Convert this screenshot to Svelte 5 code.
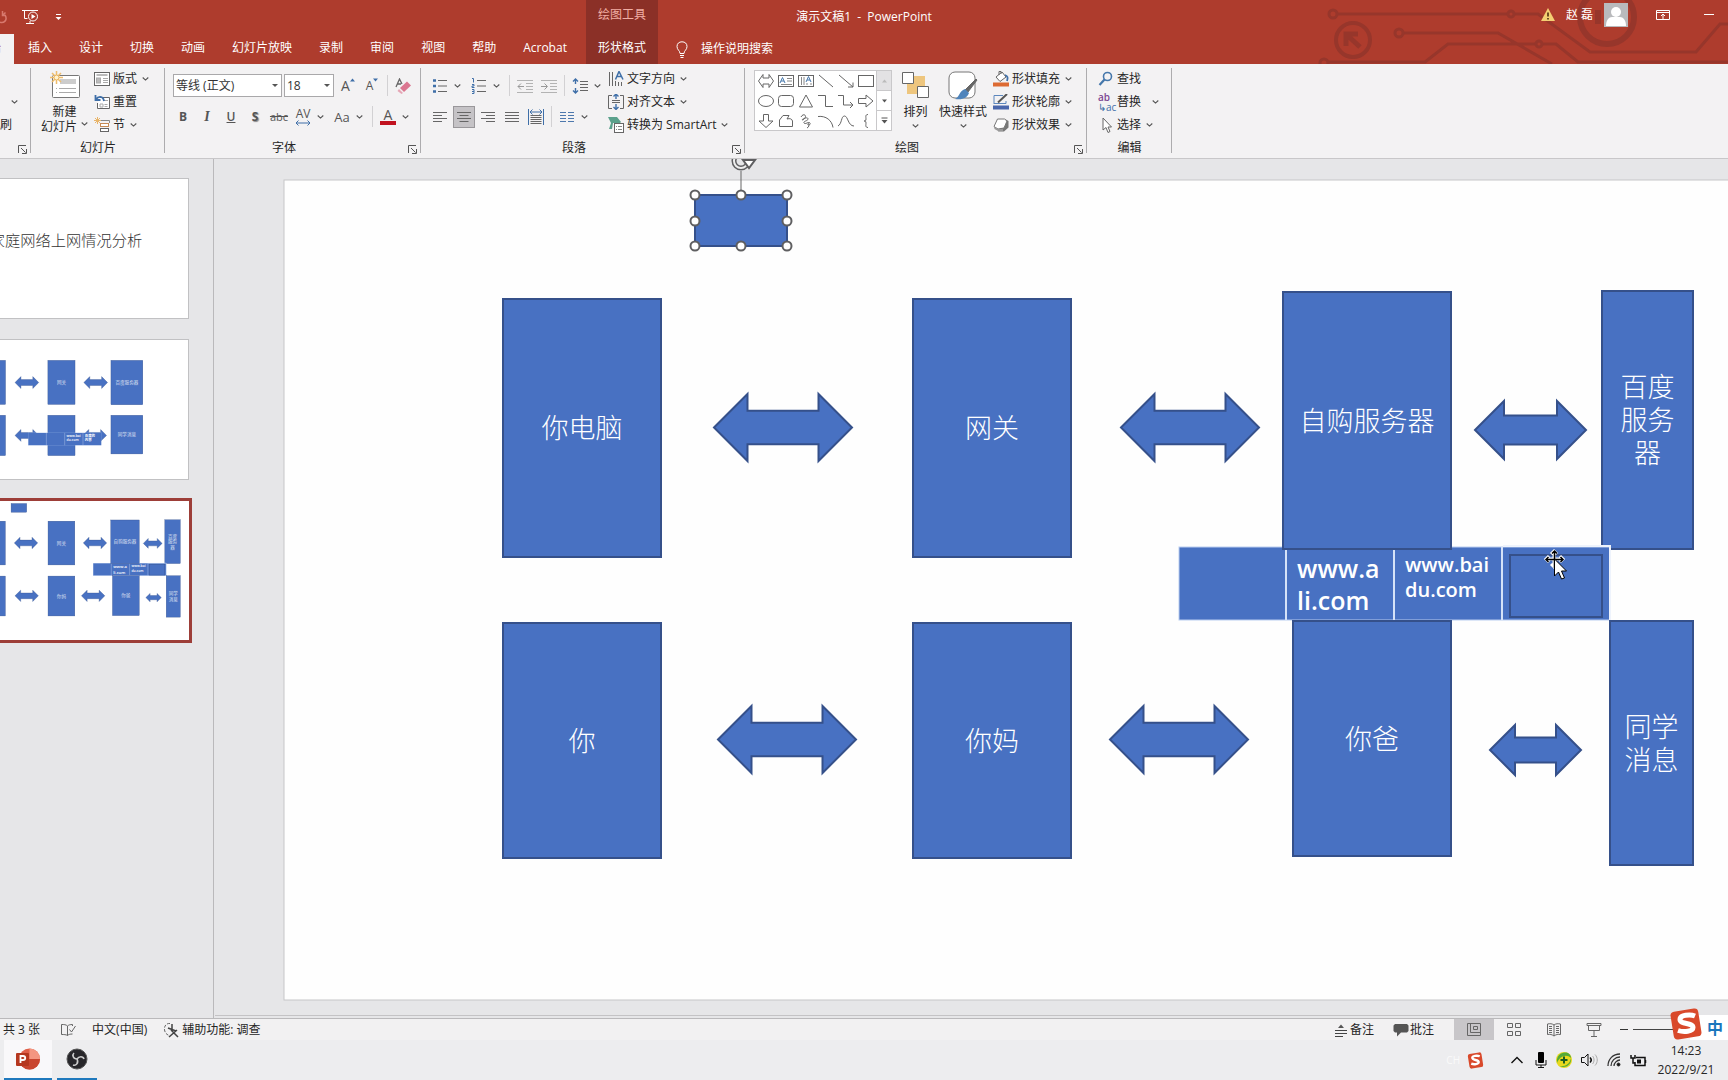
<script>
  const tabs = ['插入', '设计', '切换', '动画', '幻灯片放映', '录制', '审阅', '视图', '帮助', 'Acrobat'];
  const gallery = ['dblarrow', 'textbox', 'vtextbox', 'line', 'linearrow', 'rect', 'oval', 'round', 'tri', 'elbow', 'elbowarrow', 'right', 'down', 'freeform', 'scribble', 'arc', 'curve', 'brace'];

  const box = (x, y, w, h, lines = []) => ({ x, y, w, h, lines });
  const arrow = (x, y, w, h) => ({ x, y, w, h });

  const slide1 = { boxes: [], arrows: [], heading: '家庭网络上网情况分析' };
  const slide2 = {
    boxes: [
      box(224, 120, 160, 260, ['你电脑']), box(634, 120, 160, 260, ['网关']), box(1006, 120, 188, 262, ['百度服务器']),
      box(224, 444, 160, 238, ['你']), box(634, 444, 160, 238), box(1006, 444, 188, 228, ['同学消息'])
    ],
    arrows: [arrow(440, 216, 140, 70), arrow(846, 216, 140, 70), arrow(440, 528, 140, 70), arrow(840, 528, 140, 70)],
    table: { x: 518, y: 548, cells: [[], [], ['www.bai', 'du.com'], ['百度的', '内容']] }
  };
  const slide3 = {
    boxes: [
      box(219, 119, 158, 258, ['你电脑']), box(629, 119, 158, 258, ['网关']), box(999, 112, 168, 257, ['自购服务器']),
      box(219, 443, 158, 235, ['你']), box(629, 443, 158, 235, ['你妈']), box(1009, 441, 158, 235, ['你爸']),
      box(1326, 441, 83, 244, ['同学', '消息'])
    ],
    under: [box(1318, 111, 91, 258, ['百度', '服务', '器'])],
    arrows: [
      arrow(430, 214, 138, 67), arrow(837, 214, 138, 67), arrow(1191, 221, 111, 58),
      arrow(434, 526, 138, 67), arrow(826, 526, 138, 67), arrow(1206, 545, 91, 50)
    ],
    table: { x: 895, y: 367, cells: [[], ['www.a', 'li.com'], ['www.bai', 'du.com'], []], big: 1, mark: true },
    inset: true
  };

  const arrowPoints = (a) => {
    const k = a.h / 2, q = a.h / 4, r = a.x + a.w, m = a.y + k;
    return `${a.x},${m} ${a.x + k},${a.y} ${a.x + k},${a.y + q} ${r - k},${a.y + q} ${r - k},${a.y} ${r},${m} ${r - k},${a.y + a.h} ${r - k},${a.y + a.h - q} ${a.x + k},${a.y + a.h - q} ${a.x + k},${a.y + a.h}`;
  };
  const handles = [[411, 15], [457, 15], [503, 15], [411, 41], [503, 41], [411, 66], [457, 66], [503, 66]];
</script>

{#snippet chev()}
  <svg class="chev" viewBox="0 0 7 4" width="7" height="4" aria-hidden="true"><path d="M.7.5l2.800 2.600L6.300.5" fill="none" stroke="#555" stroke-width="1.100" /></svg>
{/snippet}

{#snippet launcher(label)}
  <button class="launcher" aria-label={label}>
    <svg viewBox="0 0 9 9" width="9" height="9"><path d="M.5 8V.5H8M3 3l4.500 4.500M8.500 4v4.500H4" fill="none" stroke="#555" /></svg>
  </button>
{/snippet}

{#snippet node(b)}
  <rect class="node" x={b.x} y={b.y} width={b.w} height={b.h} />
  {#each b.lines as line, i}
    <text class="node-text" x={b.x + b.w / 2} y={b.y + b.h / 2 + 10 + (i - (b.lines.length - 1) / 2) * 33}>{line}</text>
  {/each}
{/snippet}

{#snippet slide(s)}
  {#if s.heading}<text class="heading" x="741" y="396">{s.heading}</text>{/if}
  {#each s.arrows as a}<polygon class="node" points={arrowPoints(a)} />{/each}
  {#each s.under ?? [] as b}{@render node(b)}{/each}
  {#if s.table && s.inset}{@render table(s.table)}{/if}
  {#each s.boxes as b}{@render node(b)}{/each}
  {#if s.table && !s.inset}{@render table(s.table)}{/if}
{/snippet}

{#snippet table(t)}
  <rect x={t.x} y={t.y} width="431" height="73" fill="#4871c2" stroke="#b9cdf0" />
  {#each t.cells as cell, i}
    {#if i}<path d={`M${t.x + i * 108 - 1} ${t.y}v73`} stroke="#d5e2f8" stroke-width="2" />{/if}
    {#each cell as line, j}
      <text class={i === t.big ? 'cell big' : 'cell'} x={t.x + i * 108 + 10} y={t.y + (i === t.big ? 31 : 25) + j * (i === t.big ? 32 : 25)}>{line}</text>
    {/each}
  {/each}
  {#if t.mark}
    <path d={`M${t.x + 324} ${t.y - 1}h107v74`} fill="none" stroke="#eef3fc" stroke-width="2" />
    <rect class="node" x={t.x + 331} y={t.y + 8} width="92" height="62" />
  {/if}
{/snippet}

{#snippet icon(n)}
  <svg class="ico" viewBox="0 0 16 16" width="16" height="16" fill="none" stroke="#666" aria-hidden="true">
    {#if n === 'layout'}
      <rect x=".5" y="1.500" width="15" height="13" fill="#fff" /><path d="M2.500 4h11" stroke="#bbb" stroke-width="2" /><rect x="2.500" y="7" width="4" height="5" fill="#bbb" stroke="#aaa" /><path d="M9 7.500h5M9 9.500h5M9 11.500h5" stroke="#aaa" />
    {:else if n === 'reset'}
      <path d="M6 3.500h9.500v11h-12V9" fill="#fff" /><path d="M6 10h3v3H6zM10.500 10.500h3M10.500 12.500h3M9 6.500h5" stroke="#aaa" /><path d="M1.500 1v5h5M2 5.500C4 2 9 1.500 10 7" stroke="#3f6fa8" stroke-width="1.800" />
    {:else if n === 'section'}
      <path d="M7 3.500h8.500V6" stroke="#888" /><rect x="6.500" y="6.500" width="8" height="3" stroke="#c68a55" fill="#fff" /><rect x="6.500" y="11.500" width="8" height="3" fill="#fff" /><path d="M3.500 0v7M0 3.500h7M1 1l5 5M6 1L1 6" stroke="#e8b56a" />
    {:else if n === 'bullets'}
      <path d="M1 2.500h3M1 8h3M1 13.500h3" stroke="#3f6fa8" stroke-width="2.500" /><path d="M6 2.500h9M6 8h9M6 13.500h9" />
    {:else if n === 'numbers'}
      <path d="M1 .5h1.500v4M1 6.500h2v1.500H1v1.500h2.500M1 11.500h2v4H1M1 13.500h2" stroke="#3f6fa8" /><path d="M6 2.500h9M6 8h9M6 13.500h9" />
    {:else if n === 'outdent' || n === 'indent'}
      <path d="M0 2.500h16M9 5.500h7M9 8.500h7M9 11.500h7M0 14.500h16" stroke="#b3b3b3" />
      {#if n === 'outdent'}<path d="M7 8.500H1M4 5.500l-3 3 3 3" stroke="#999" />{:else}<path d="M0 8.500h6M3.500 5.500l3 3-3 3" stroke="#999" />{/if}
    {:else if n === 'spacing'}
      <path d="M3.500 1v5M1 3.500l2.500-2.500L6 3.500M3.500 10v5M1 12.500L3.500 15 6 12.500" stroke="#3f6fa8" stroke-width="1.400" /><path d="M8 3.500h8M8 6.500h8M8 9.500h8M8 12.500h8" />
    {:else if n === 'left'}
      <path d="M1 3.500h14M1 6.500h9M1 9.500h14M1 12.500h9" />
    {:else if n === 'center'}
      <path d="M1 3.500h14M3.500 6.500h9M1 9.500h14M3.500 12.500h9" />
    {:else if n === 'rightal'}
      <path d="M1 3.500h14M6 6.500h9M1 9.500h14M6 12.500h9" />
    {:else if n === 'justify'}
      <path d="M1 3.500h14M1 6.500h14M1 9.500h14M1 12.500h14" />
    {:else if n === 'distribute'}
      <path d="M.5 0v16M15.500 0v16M2 3h12M4.500.5L2 3l2.500 2.500M11.500.5L14 3l-2.500 2.500" stroke="#3f6fa8" /><path d="M2.500 6.500h11M2.500 8.500h11M2.500 10.500h11M2.500 12.500h11M2.500 14.500h11" />
    {:else if n === 'columns'}
      <path d="M1 3.500h6M1 6.500h6M1 9.500h6M1 12.500h6M9 3.500h6M9 6.500h6M9 9.500h6M9 12.500h6" stroke="#4d78ad" stroke-width="1.200" />
    {:else if n === 'direction'}
      <path d="M1.500 1v14M4.500 1v14M7.500 10v5M10.500 11v4M13.500 11v4" /><path d="M7.500 8.500L11 .5l4 8M9 5.500h4.500" stroke="#3f6fa8" stroke-width="1.500" />
    {:else if n === 'alignv'}
      <path d="M4 1.500H.5v13H4M12 1.500h3.500v13H12M4 6.500h8M4 8.500h8" /><path d="M8 0v5M5.500 2.500L8 0l2.500 2.500M8 10v5M5.500 13L8 15.500 10.500 13" stroke="#3f6fa8" stroke-width="1.400" />
    {:else if n === 'smartart'}
      <path d="M0 0h9l4 5-1 1H5l-1 6H1l2-6z" fill="#5ba18c" stroke="none" /><rect x="6.500" y="6.500" width="9" height="9" fill="#fff" /><path d="M8 9.500h1M10 9.500h4M8 12.500h1M10 12.500h4" stroke="#888" />
    {:else if n === 'fill'}
      <path d="M3 6l6-5 4 5-6 4.500zM6 4V.5h2V3" fill="#fff" /><path d="M12 4c3 1 3 3 2 6" stroke="#3f6fa8" stroke-width="1.800" /><path d="M0 13.500h16" stroke="#dd6b33" stroke-width="4" />
    {:else if n === 'outline'}
      <path d="M1 10V1.500h9M1 9.500h12V7" stroke="#5c87bd" /><path d="M5 8.500L14 0" stroke="#555" stroke-width="2" /><path d="M0 13.500h16" stroke="#4a67ab" stroke-width="4" />
    {:else if n === 'effect'}
      <path d="M5 14.500h6l4.500-4V4L12 2z" fill="#777" stroke="none" /><path d="M4.500 2h7l2.500 2-3 7-6 1-4-2.500z" fill="#fff" stroke="#777" /><path d="M1 9.500l4 2.500h5v2H5L1.500 12z" fill="#999" stroke="none" />
    {:else if n === 'find'}
      <circle cx="9.500" cy="5.500" r="4" stroke="#4577ab" stroke-width="1.600" /><path d="M6.500 8.500L1.500 14" stroke="#4577ab" stroke-width="2.200" />
    {:else if n === 'select'}
      <path d="M5 1v12l3-2.500 2 5 2-1-2-4.500h3.500z" fill="#fff" />
    {:else if n === 'eraser'}
      <path d="M1 9L4.500 1 7 6M2.500 6H6" stroke-width="1.300" /><path d="M5 10l7-6.500 4 4L9 14z" fill="#db7690" stroke="none" /><path d="M4 11l4 4-1.500 1L2.500 13z" fill="#e5a6b5" stroke="none" />
    {:else if n === 'dblarrow'}
      <path d="M.5 8L5 1.500V5h6V1.500L15.500 8 11 14.500V11H5v3.500z" />
    {:else if n === 'textbox'}
      <rect x=".5" y="2.500" width="15" height="11" /><path d="M2 10l2.500-5.500L7 10M3 8h3" stroke="#4577ab" /><path d="M9 5.500h5M9 8h5M3 11.500h11" stroke="#888" />
    {:else if n === 'vtextbox'}
      <rect x=".5" y="2.500" width="15" height="11" /><path d="M3.500 4v8M6 4v8M9 10v2M13 10v2" stroke="#888" /><path d="M8 9l2.500-5.500L13 9M9 7h3" stroke="#4577ab" />
    {:else if n === 'line'}
      <path d="M1 2l14 12" />
    {:else if n === 'linearrow'}
      <path d="M1 2l14 12M15 9.500V14h-5" />
    {:else if n === 'rect'}
      <rect x=".5" y="2.500" width="15" height="11" />
    {:else if n === 'oval'}
      <ellipse cx="8" cy="8" rx="7.500" ry="5.500" />
    {:else if n === 'round'}
      <rect x=".5" y="2.500" width="15" height="11" rx="3" />
    {:else if n === 'tri'}
      <path d="M8 2l6.500 12h-13z" />
    {:else if n === 'elbow'}
      <path d="M0 2.500h7.500v11H15" />
    {:else if n === 'elbowarrow'}
      <path d="M0 2.500h5.500v9.500H15M12 9l3 3-3 3" />
    {:else if n === 'right'}
      <path d="M.5 5.500H8V2l7 6-7 6v-3.500H.5z" />
    {:else if n === 'down'}
      <path d="M5.500 1.500h5V8H15l-7 6.500L1 8h4.500z" />
    {:else if n === 'freeform'}
      <path d="M1.500 13.500V7L5 2.500h6L9 6c3-1 5 0 5.500 2v5.500z" />
    {:else if n === 'scribble'}
      <path d="M3 4c2-4 6-2 4 1s-4 2-2 1 5-2 5 0-5 2-4 4 5-2 6 0-3 3-2 1 2 3-1 4" />
    {:else if n === 'arc'}
      <path d="M0 3.500c8-1 14 4 15 11" />
    {:else if n === 'curve'}
      <path d="M0 13C4 11 3 3 6.500 3S10 13 16 13" />
    {:else if n === 'brace'}
      <path d="M10 1.500C7 1.500 8 4 8 6S7 8 6 8c1 0 2 0 2 2s-1 4.500 2 4.500" />
    {:else if n === 'normal'}
      <path d="M1.500 1.500h13v12h-13zM4.500 1.500v9M4.500 10.500h10M7.500 4.500h4v3h-4z" />
    {:else if n === 'sorter'}
      <path d="M1.500 1.500h5v4h-5zM9.500 1.500h5v4h-5zM1.500 9.500h5v4h-5zM9.500 9.500h5v4h-5z" />
    {:else if n === 'reading'}
      <path d="M8 3v11M8 3C6 1.500 4 1.500 1.500 2v10.500c2.500-.5 4.500 0 6.500 1.500 2-1.500 4-2 6.500-1.500V2C12 1.500 10 1.500 8 3zM3 4.500h3M3 6.500h3M3 8.500h3M3 10.500h3M10 4.500h3M10 6.500h3M10 8.500h3M10 10.500h3" />
    {:else if n === 'show'}
      <path d="M1 1.500h14v2H1zM2.500 3.500v5h11v-5M8 8.500V14M5 14.500h6" />
    {:else if n === 'notes'}
      <path d="M2 8.500h12M2 11.500h12M2 14.500h8" stroke="#444" /><path d="M5 6l3-3.500L11 6z" fill="#555" stroke="none" />
    {:else if n === 'comment'}
      <path d="M2 2h12l1.500 1.500V9L14 10.500H8L4 14.500v-4H2L.5 9V3.500z" fill="#555" stroke="none" />
    {:else if n === 'proof'}
      <path d="M7.500 13.500V4C6 2.500 4 2.500 1.500 2.500v10c2.500 0 4.500 0 6 1 1-1 2.500-1.500 5-1.500M7.500 4c1-1 2.500-1.500 5-1.500V4M9.500 7.500l2 2.500 4-6" />
    {:else if n === 'access'}
      <path d="M7 1.500C3 1 1 4.500 1.500 8c.5 3 2.500 5 5 5.500" stroke-dasharray="3 1.500" /><path d="M9 2v6M5 6l8 3M8 8l7 7M14 8l-8 7" stroke="#444" stroke-width="1.500" />
    {/if}
  </svg>
{/snippet}

{#snippet tool(n, label)}
  <button class="tool" aria-label={label}>{@render icon(n)}</button>
{/snippet}

{#snippet row(n, label, more)}
  <button class="row">{@render icon(n)}<span>{label}</span>{#if more}{@render chev()}{/if}</button>
{/snippet}

<div class="app">
  <header>
    <svg class="circuit" viewBox="0 0 478 64" width="478" height="64" fill="none" stroke="#97362b" stroke-width="3" aria-hidden="true">
      <circle cx="83" cy="14" r="4" /><path d="M87 14h170M265 14h23l52 38h106l24-28h8M153 33h95l54 31M78 62h97l23-18h87M293 44h13l22 18h150" />
      <circle cx="261" cy="14" r="3" /><circle cx="149" cy="33" r="4" /><circle cx="289" cy="44" r="3" /><circle cx="74" cy="63" r="4" />
      <circle cx="103" cy="40" r="17" stroke-width="4" /><path d="M96 46V34h12M97 35l13 12" stroke-width="5" /><circle cx="357" cy="17" r="27" stroke-width="6" /><path d="M348 10v14" stroke-width="6" />
    </svg>
    <div class="title-bar">
      <div class="quick">
        <button aria-label="恢复" class="redo"><svg viewBox="0 0 14 16" width="14" height="16"><path d="M9.500 2v4.500H13M9.500 6.500l3-3M12 6c3 5-1 9-6 7" fill="none" stroke="#d8796e" stroke-width="1.500" /></svg></button>
        <button aria-label="从头开始放映"><svg viewBox="0 0 17 16" width="17" height="16" fill="none" stroke="#fff"><path d="M0 1.500h16M2.500 1.500v8h3M4 14.500h8M8 12v2" /><circle cx="11" cy="7.500" r="4.500" /><path d="M9.500 5l4 2.500-4 2.500z" fill="#fff" stroke="none" /></svg></button>
        <button aria-label="自定义快速访问工具栏"><svg viewBox="0 0 7 8" width="7" height="8"><path d="M1 1.500h5" stroke="#fff" /><path d="M.5 4h6l-3 3z" fill="#fff" /></svg></button>
      </div>
      <h1>演示文稿1&nbsp; -&nbsp; PowerPoint</h1>
      <div class="account">
        <svg viewBox="0 0 14 14" width="14" height="14"><path d="M7 0l7 13H0z" fill="#f4cf73" /><path d="M7 4.500v4M7 10v1.500" stroke="#4a2b10" stroke-width="1.600" /></svg>
        <button class="user">赵 磊</button>
        <svg class="avatar" viewBox="0 0 24 24" width="24" height="24"><path fill="#b9babd" d="M0 0h24v24H0z" /><circle cx="12" cy="9" r="5" fill="#fff" /><path d="M2 23c0-6 3-9 6-9h8c3 0 6 3 6 9z" fill="#fff" /></svg>
        <button class="display" aria-label="功能区显示选项"><svg viewBox="0 0 14 12" width="14" height="12" fill="none" stroke="#fff"><path d="M.5 1.500h13v9H.5zM.5 3.500h13M7 10V5M5 7l2-2 2 2" /></svg></button>
        <button class="minimize" aria-label="最小化"><svg viewBox="0 0 10 2" width="10" height="2"><path d="M0 .5h10" stroke="#fff" /></svg></button>
      </div>
    </div>
    <nav>
      <button class="tab active">开始</button>
      {#each tabs as t}<button class="tab">{t}</button>{/each}
      <button class="tab context"><span class="context-title">绘图工具</span>形状格式</button>
      <button class="tell">
        <svg viewBox="0 0 12 17" width="12" height="17" fill="none" stroke="#fff"><path d="M4 12.500C4 9.500 1 9 1 5.500 1 2.500 3 .8 6 .8s5 1.700 5 4.700c0 3.500-3 4-3 7zM4 14.500h4M4.500 16.500h3" /></svg>
        操作说明搜索
      </button>
    </nav>
  </header>

  <section class="ribbon" aria-label="功能区">
    <div class="group clip">
      <div class="body clipboard"><button aria-label="复制">{@render chev()}</button><button>刷</button></div>
      <footer>{@render launcher('剪贴板设置')}</footer>
    </div>
    <div class="group slides">
      <div class="body">
        <button class="large new">
          <svg viewBox="0 0 30 28" width="30" height="28"><rect x="2.500" y="4.500" width="27" height="22" rx="1" fill="#fff" stroke="#777" /><path d="M10 8h16v5H10z" fill="#ccc" /><path d="M6 17.500h1M9 17.500h17M6 21.500h1M9 21.500h17" stroke="#aaa" /><path d="M6.500 0v13M0 6.500h13M2 2l9 9M11 2l-9 9" stroke="#efbd6b" stroke-width="1.500" /><circle cx="6.500" cy="6.500" r="2.500" fill="#fff3d0" stroke="#e8b35c" /></svg>
          <span>新建</span><span class="with-chev">幻灯片 {@render chev()}</span>
        </button>
        <div class="stack">{@render row('layout', '版式', true)}{@render row('reset', '重置')}{@render row('section', '节', true)}</div>
      </div>
      <footer>幻灯片</footer>
    </div>
    <div class="group font">
      <div class="body rows">
        <div class="line">
          <label class="combo name"><select aria-label="字体"><option>等线 (正文)</option></select></label>
          <label class="combo size"><select aria-label="字号"><option>18</option></select></label>
          <button class="tool grow" aria-label="增大字号">A<svg viewBox="0 0 5 4" width="5" height="4"><path d="M0 3.500L2.500.5 5 3.500z" fill="#3f6fa8" /></svg></button>
          <button class="tool shrink" aria-label="减小字号">A<svg viewBox="0 0 5 4" width="5" height="4"><path d="M0 .5l2.500 3L5 .5z" fill="#3f6fa8" /></svg></button>
          <i class="sep"></i>{@render tool('eraser', '清除格式')}
        </div>
        <div class="line">
          <button class="tool"><b>B</b></button><button class="tool serif"><em>I</em></button><button class="tool under"><u>U</u></button><button class="tool shadow"><b>S</b></button><button class="tool strike"><s>abc</s></button>
          <button class="tool more spacing"><span>AV<svg viewBox="0 0 16 6" width="16" height="6"><path d="M1 3h14M3.500.5L1 3l2.500 2.500M12.500.5L15 3l-2.500 2.500" fill="none" stroke="#3f6fa8" /></svg></span>{@render chev()}</button>
          <button class="tool more case"><span>Aa</span>{@render chev()}</button><i class="sep"></i>
          <button class="tool more color"><span>A</span>{@render chev()}</button>
        </div>
      </div>
      <footer class="with-launcher">字体{@render launcher('字体设置')}</footer>
    </div>
    <div class="group paragraph">
      <div class="body">
        <div class="rows">
          <div class="line">
            <button class="tool more" aria-label="项目符号">{@render icon('bullets')}{@render chev()}</button><button class="tool more" aria-label="编号">{@render icon('numbers')}{@render chev()}</button><i class="sep"></i>
            {@render tool('outdent', '降低列表级别')}{@render tool('indent', '提高列表级别')}<i class="sep"></i>
            <button class="tool more" aria-label="行距">{@render icon('spacing')}{@render chev()}</button>
          </div>
          <div class="line">
            {@render tool('left', '左对齐')}<button class="tool pressed" aria-label="居中" aria-pressed="true">{@render icon('center')}</button>{@render tool('rightal', '右对齐')}{@render tool('justify', '两端对齐')}{@render tool('distribute', '分散对齐')}<i class="sep"></i>
            <button class="tool more" aria-label="分栏">{@render icon('columns')}{@render chev()}</button>
          </div>
        </div>
        <div class="stack">{@render row('direction', '文字方向', true)}{@render row('alignv', '对齐文本', true)}{@render row('smartart', '转换为 SmartArt', true)}</div>
      </div>
      <footer class="with-launcher">段落{@render launcher('段落设置')}</footer>
    </div>
    <div class="group drawing">
      <div class="body">
        <div class="gallery">
          <div class="shapes">{#each gallery as g}<button aria-label={g}>{@render icon(g)}</button>{/each}</div>
          <div class="scroll">
            <button class="off" aria-label="向上"><svg viewBox="0 0 5 4" width="5" height="4"><path d="M0 3.500L2.500.5 5 3.500z" fill="#bbb" /></svg></button>
            <button aria-label="向下"><svg viewBox="0 0 5 4" width="5" height="4"><path d="M0 .5l2.500 3L5 .5z" fill="#555" /></svg></button>
            <button aria-label="其他"><svg viewBox="0 0 7 7" width="7" height="7"><path d="M.5 1h6" stroke="#555" /><path d="M.5 3h6l-3 3.500z" fill="#555" /></svg></button>
          </div>
        </div>
        <button class="large"><svg viewBox="0 0 27 28" width="27" height="28"><path d="M12 5h11v10h-7v8H5V13h7z" fill="#eec67e" /><path d="M.5 1.500h11v11H.5zM15.500 15.500h11v11h-11z" fill="#fff" stroke="#666" /></svg><span>排列</span>{@render chev()}</button>
        <button class="large quickstyle"><svg viewBox="0 0 30 30" width="30" height="30"><rect x="1" y="1" width="26" height="26" rx="6" fill="#fff" stroke="#777" /><path d="M29 9l-9 12-3-2L28 8z" fill="#666" stroke="#666" /><path d="M17 18l4 4c-2 5-6 7-14 6 4-1 4-8 10-10z" fill="#4f84bb" /></svg><span>快速样式</span>{@render chev()}</button>
        <div class="stack">{@render row('fill', '形状填充', true)}{@render row('outline', '形状轮廓', true)}{@render row('effect', '形状效果', true)}</div>
      </div>
      <footer class="with-launcher">绘图{@render launcher('设置形状格式')}</footer>
    </div>
    <div class="group edit">
      <div class="body stack">
        {@render row('find', '查找')}
        <button class="row replace"><span class="glyph" aria-hidden="true"><b>ab</b><br />↳ac</span><span>替换</span>{@render chev()}</button>
        {@render row('select', '选择', true)}
      </div>
      <footer>编辑</footer>
    </div>
  </section>

  <main>
    <aside>
      {#each [slide1, slide2, slide3] as s, i}
        <button class="thumb" class:current={i === 2} aria-label={`幻灯片 ${i + 1}`}>
          <svg viewBox="0 0 1458 820" width="248" height="139">{@render slide(s)}{#if i === 2}<rect class="node" x="411" y="15" width="92" height="51" />{/if}</svg>
        </button>
      {/each}
    </aside>
    <div class="stage">
      <svg class="canvas" viewBox="0 0 1458 820" width="1458" height="820">
        <rect x="0" y="0" width="1457" height="820" fill="#fefefe" stroke="#c6c6c8" />
        {@render slide(slide3)}
        <path d="M457 15V-9" stroke="#666" />
        <g fill="none" stroke="#5f5f61"><circle cx="457" cy="-19" r="7" stroke-width="5" /><circle cx="457" cy="-19" r="7" stroke="#eee" stroke-width="2" /><path d="M459-20h12l-6 8z" fill="#fff" stroke-width="2" /></g>
        <rect class="node" x="411" y="15" width="92" height="51" />
        {#each handles as h}<circle cx={h[0]} cy={h[1]} r="4.500" fill="#fff" stroke="#5f5f61" stroke-width="2" />{/each}
        <g><path d="M1270 371v17M1262 379h17M1267 374l3-3 3 3M1267 384l3 3 3-3M1265 376l-3 3 3 3M1276 376l3 3-3 3" fill="none" stroke="#fff" stroke-width="3" /><path d="M1270.500 371v17M1262 379.500h17M1268 373.500l2.500-2.500 2.500 2.500M1264.500 377l-2.500 2.500 2.500 2.500M1276.500 377l2.500 2.500-2.500 2.500" fill="none" stroke="#000" stroke-width="1.500" /><path d="M1270.500 379v17l4-4 3 7 3-1-3-7h5z" fill="#fff" stroke="#000" /></g>
      </svg>
    </div>
  </main>

  <div class="status">
    <span>共 3 张</span><button class="proof" aria-label="拼写检查">{@render icon('proof')}</button><button class="lang">中文(中国)</button><button class="acc">{@render icon('access')}辅助功能: 调查</button>
    <div class="views">
      <button class="note">{@render icon('notes')}备注</button><button class="note">{@render icon('comment')}批注</button>
      <button class="view on" aria-label="普通视图">{@render icon('normal')}</button><button class="view" aria-label="幻灯片浏览">{@render icon('sorter')}</button><button class="view" aria-label="阅读视图">{@render icon('reading')}</button><button class="view" aria-label="幻灯片放映">{@render icon('show')}</button>
      <button class="minus" aria-label="缩小"><svg viewBox="0 0 8 2" width="8" height="2"><path d="M0 .5h8" stroke="#333" /></svg></button>
      <input type="range" aria-label="缩放" />
    </div>
    <div class="ime">
      <svg viewBox="0 0 32 32" width="32" height="32"><rect x="2" y="2" width="28" height="28" rx="4" fill="#d9492b" transform="rotate(-9 16 16)" /><path d="M25 8c-5-2-15-1-15 3.500 0 5 13 3 13 8 0 4-9 5-15 3" fill="none" stroke="#fff" stroke-width="5" /></svg>
      <span>中</span>
    </div>
  </div>

  <div class="taskbar">
    <button class="task ppt" aria-label="PowerPoint"><svg viewBox="0 0 24 22" width="24" height="22"><circle cx="13.500" cy="11" r="10.500" fill="#e0604a" /><path d="M13.500 11V.5A10.500 10.500 0 0 1 24 11z" fill="#f49681" /><path d="M3 11h21a10.500 10.500 0 0 1-21 0z" fill="#c8452f" /><rect y="5" width="13" height="13" rx="1" fill="#b5371f" /><path d="M4.500 15V8H7c3 0 3 4 0 4H4.500" fill="none" stroke="#fff" stroke-width="1.800" /></svg></button>
    <button class="task obs" aria-label="OBS Studio"><svg viewBox="0 0 22 22" width="22" height="22"><circle cx="11" cy="11" r="10" fill="#27262a" stroke="#555" /><path d="M11 11c-4 0-5-4-3-6M11 11c2-3 6-3 7 0M11 11c2 4-1 7-4 6" fill="none" stroke="#ccc" stroke-width="1.600" /></svg></button>
    <div class="tray">
      <span class="ch">CH</span>
      <svg viewBox="0 0 32 32" width="17" height="17"><rect x="3" y="2" width="26" height="28" rx="4" fill="#d9492b" transform="rotate(-9 16 16)" /><path d="M24 8c-5-2-14-1-14 3 0 5 12 3 12 8 0 4-9 5-14 3" fill="none" stroke="#fff" stroke-width="4.500" /></svg>
      <button class="up" aria-label="显示隐藏的图标"><svg viewBox="0 0 12 8" width="12" height="8"><path d="M.5 7L6 1.500 11.500 7" fill="none" stroke="#111" stroke-width="1.400" /></svg></button>
      <svg class="mic" viewBox="0 0 12 16" width="12" height="16"><rect x="3" width="6" height="11" rx="1" /><path d="M1 8v5h10V8M6 13v2.500M3 15.500h6" fill="none" stroke="#111" /></svg>
      <svg viewBox="0 0 16 16" width="16" height="16"><circle cx="8" cy="8" r="8" fill="#e9d91d" /><path d="M1 11C0 4 5-1 12 1c2 1 3 3 3 5C10 1 3 5 1 11zM15 6c1 7-6 11-12 8 6 1 11-2 12-8z" fill="#55aa38" /><path d="M8 4.500v7M4.500 8h7" stroke="#1d5d20" stroke-width="2" /></svg>
      <svg viewBox="0 0 17 14" width="17" height="14" fill="none" stroke="#111"><path d="M.5 4.500h3L7 1v12L3.500 9.500h-3z" /><path d="M9 4.500c1.500 1.500 1.500 3.500 0 5" stroke-width="1.500" /><path d="M11.500 3c2 2 2 6 0 8M14 1.500c3 3 3 8 0 11" stroke="#aaa" /></svg>
      <svg viewBox="0 0 14 14" width="14" height="14" fill="none" stroke="#333"><path d="M1 13C1 6 6 1 13 1M4 13c0-5 4-9 9-9M7 13c0-3 3-6 6-6" stroke-width="1.300" /><circle cx="11.500" cy="11.500" r="1.500" fill="#111" /></svg>
      <svg viewBox="0 0 17 13" width="17" height="13" fill="none" stroke="#111"><path d="M6 3.500h9v8H5V8M15.500 6v3M1 1v3h4V1M3 4v5h2" stroke-width="1.500" /><path d="M7 5.500h4v4H7z" fill="#111" stroke="none" /></svg>
      <time><span>14:23</span><span>2022/9/21</span></time>
    </div>
  </div>
</div>

<style>
  :global(body) { margin: 0; overflow: hidden; }
  .app { height: 100vh; display: flex; flex-direction: column; overflow: hidden; background: #e6e6e8; color: #262626; font: 12px/16px "Open Sans", "Noto Sans CJK SC", sans-serif; }
  button { border: 0; padding: 0; background: none; color: inherit; font: inherit; white-space: nowrap; }
  svg { flex: none; display: block; }
  header { position: relative; flex: none; background: #ae3c2d; color: #fff; }
  .circuit { position: absolute; right: 0; top: 0; }
  .title-bar { position: relative; height: 34px; display: grid; grid-template-columns: 1fr auto 1fr; align-items: center; }
  .quick { display: flex; align-items: center; gap: 15px; }
  .quick .redo { margin-left: -7px; }
  .quick button:last-child { margin-left: 1px; }
  h1 { margin: 0; font: inherit; }
  .account { display: flex; align-items: center; justify-content: flex-end; height: 30px; margin-bottom: 4px; }
  .user { margin: 0 11px 0 11px; }
  .display { margin: 0 34px 0 28px; }
  .minimize { margin-right: 14px; }
  nav { position: relative; height: 30px; display: flex; }
  .tab { padding: 0 13px 2px; margin-right: 1px; }
  .active { margin-left: -36px; background: #f3f2f3; color: #b03a2b; }
  .context { position: relative; padding: 0 12px 2px; margin-left: 5px; background: #8b3027; }
  .context-title { position: absolute; left: 0; right: 0; bottom: 100%; height: 34px; line-height: 30px; background: #8b3027; color: #f1aea4; }
  .tell { display: flex; align-items: center; gap: 13px; margin-left: 17px; }

  .ribbon { flex: none; display: flex; height: 94px; background: #f3f2f3; border-bottom: 1px solid #c8c7c9; }
  .group { position: relative; box-sizing: border-box; flex: none; display: flex; flex-direction: column; padding-top: 3px; }
  .group::after { content: ""; position: absolute; right: 0; top: 4px; bottom: 5px; width: 1px; background: #adacae; }
  .body { display: flex; height: 70px; }
  footer { height: 21px; line-height: 21px; text-align: center; }
  .with-launcher { padding-right: 18px; }
  .launcher { position: absolute; right: 4px; bottom: 4px; }
  .clip { width: 31px; }
  .slides { width: 134px; }
  .font { width: 256px; }
  .paragraph { width: 324px; }
  .drawing { width: 342px; }
  .edit { width: 85px; }
  .clipboard { flex-direction: column; align-items: flex-start; padding-top: 23px; box-sizing: border-box; }
  .clipboard button { height: 23px; }
  .clipboard .chev { margin-left: 11px; }
  .stack { display: flex; flex-direction: column; }
  .row { display: flex; align-items: center; height: 23px; gap: 3px; }
  .row .chev { margin-left: 2px; }
  .large { display: flex; flex-direction: column; align-items: center; box-sizing: border-box; padding-top: 4px; line-height: 15px; }
  .large svg:first-child { margin-bottom: 5px; }
  .large > .chev { margin-top: 5px; }
  .new { margin: 0 6px 0 10px; }
  .with-chev { display: flex; align-items: center; gap: 4px; padding-bottom: 2px; }
  .rows { display: block; padding: 3px 0 0 6px; box-sizing: border-box; }
  .paragraph .rows { width: 187px; padding-left: 7px; }
  .line { display: flex; align-items: center; height: 31px; }
  .font .line:first-child { padding-left: 2px; }
  .tool { width: 24px; height: 22px; display: flex; align-items: center; justify-content: center; color: #555; }
  .more { width: 39px; justify-content: flex-start; padding-left: 4px; box-sizing: border-box; gap: 6px; }
  .pressed { width: 22px; margin: 0 1px; background: #c5c3c6; outline: 1px solid #99979a; outline-offset: -1px; }
  .sep { width: 1px; height: 21px; margin: 0 3px; background: #d2d1d3; }
  .combo { position: relative; display: block; margin-right: 2px; }
  .combo::after { content: ""; position: absolute; right: 4px; top: 10px; border: 3px solid transparent; border-top-color: #555; border-bottom: 0; }
  select { appearance: none; box-sizing: border-box; width: 100%; height: 23px; padding: 0 2px; border: 1px solid #a9a8aa; border-radius: 0; background: #fff; color: #333; font: inherit; display: block; }
  .name { width: 109px; }
  .size { width: 50px; }
  .grow { font-size: 14px; }
  .shrink { font-size: 12px; }
  .grow svg, .shrink svg { margin-bottom: 12px; }
  .serif { font-family: "Liberation Serif", serif; font-size: 14px; font-weight: bold; }
  .under { font-weight: 600; }
  .shadow { text-shadow: 1px 1px 1px #888; }
  .strike { font-size: 11px; }
  .spacing span { width: 16px; line-height: 12px; }
  .case span { width: 16px; font-size: 13px; }
  .color span { width: 16px; height: 13px; line-height: 13px; font-size: 14px; border-bottom: 4px solid #c1121f; }
  .gallery { display: flex; width: 138px; height: 61px; margin: 3px 0 0 9px; box-sizing: border-box; background: #fff; border: 1px solid #c9c8ca; }
  .shapes { display: grid; grid-template-columns: repeat(6, 20px); grid-auto-rows: 20px; padding-left: 1px; }
  .shapes button { display: grid; place-items: center; }
  .scroll { flex: 1; display: flex; flex-direction: column; border-left: 1px solid #c9c8ca; }
  .scroll button { flex: 1; display: grid; place-items: center; border-top: 1px solid #c9c8ca; }
  .scroll .off { border-top: 0; background: #e3e2e4; }
  .gallery + .large { margin: 0 10px; }
  .quickstyle { margin-right: 6px; }
  .large.quickstyle svg:first-child { margin-bottom: 3px; }
  .edit .stack { padding-left: 11px; }
  .glyph { width: 16px; font-size: 10px; line-height: 10px; color: #3f6fa8; text-align: left; }
  .glyph b { color: #7c4592; font-weight: 600; }
  .row.replace .chev { margin-left: 8px; }

  main { flex: 1; min-height: 0; display: flex; border-bottom: 1px solid #bab9bb; }
  aside { flex: none; width: 213px; border-right: 1px solid #bab9bb; padding-top: 19px; display: flex; flex-direction: column; align-items: flex-start; gap: 20px; overflow: hidden; }
  .thumb { flex: none; margin-left: -61px; background: #fff; border: 1px solid #c1c1c3; overflow: hidden; }
  .current { border: 3px solid #9d3e38; margin-left: -62px; margin-top: -2px; }
  .stage { flex: 1; min-width: 0; overflow: hidden; padding: 21px 0 0 69px; border-bottom: 1px solid #c4c3c5; margin: 0 0 2px 1px; }
  .canvas { overflow: visible; }
  .node { fill: #4871c2; stroke: #35508a; stroke-width: 2; }
  .node-text { fill: #fff; font: 300 27px "Noto Sans CJK SC", sans-serif; text-anchor: middle; }
  .heading { fill: #333; font: 300 90px "Noto Sans CJK SC", sans-serif; text-anchor: middle; }
  .cell { fill: #fff; font: 600 20px "Open Sans", "Noto Sans CJK SC", sans-serif; }
  .big { font-size: 25px; }

  .status { position: relative; flex: none; display: flex; align-items: center; height: 21px; padding-left: 3px; background: #f2f1f2; }
  .proof { margin: 0 16px 0 20px; }
  .acc { display: flex; align-items: center; gap: 3px; margin-left: 16px; }
  .views { width: 395px; margin-left: auto; display: flex; align-items: center; height: 100%; }
  .note { display: flex; align-items: center; gap: 1px; margin-right: 19px; }
  .note + .view { margin-left: 1px; }
  .view { width: 40px; height: 100%; display: grid; place-items: center; }
  .on { background: #c8c6c9; }
  .minus { margin: 0 5px 0 6px; }
  input[type="range"] { flex: 1; min-width: 0; margin: 0; height: 1px; appearance: none; background: #444; }
  input[type="range"]::-webkit-slider-thumb { appearance: none; width: 1px; height: 1px; background: #444; }
  .ime { position: absolute; right: 0; bottom: 0; width: 38px; height: 25px; display: flex; justify-content: flex-end; align-items: center; background: #fff; box-sizing: border-box; padding-right: 5px; color: #1976bd; font-size: 16px; font-weight: bold; }
  .ime svg { position: absolute; right: 26px; bottom: 0; }
  .taskbar { flex: none; display: flex; height: 40px; padding-left: 4px; background: #ededef; }
  .task { display: grid; place-items: center; border-bottom: 2px solid #1f79bd; box-sizing: border-box; }
  .ppt { width: 48px; background: #f9f8fa; margin-right: 5px; }
  .obs { width: 40px; }
  .tray { margin-left: auto; display: flex; align-items: center; gap: 9px; padding-right: 12px; }
  .ch { color: #fafafa; font-size: 10px; margin-right: -2px; }
  .up { margin-left: 18px; }
  .mic { margin-left: 3px; }
  time { display: flex; flex-direction: column; align-items: center; width: 60px; line-height: 19px; }
</style>
